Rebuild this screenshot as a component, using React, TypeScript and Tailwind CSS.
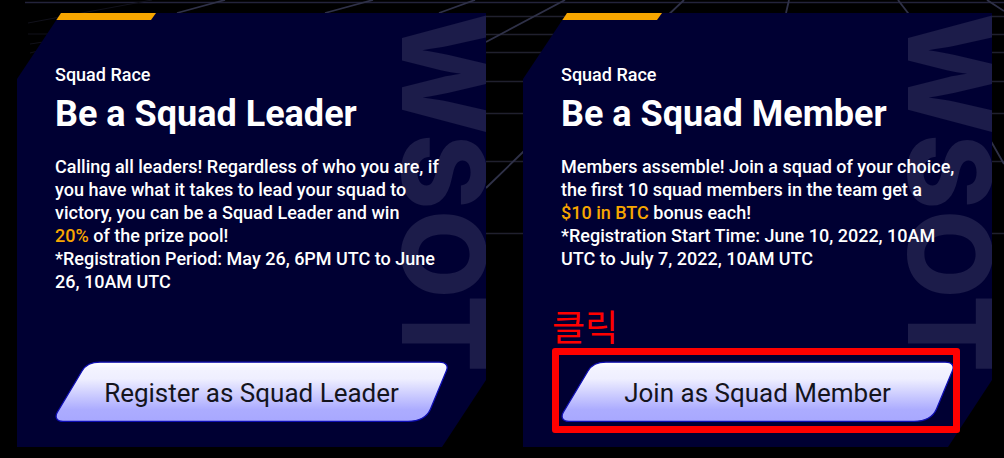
import type { ReactNode } from "react";

function GridBackdrop() {
  const rows = [16, 34, 52, 81, 113, 161, 233];
  return (
    <svg
      aria-hidden="true"
      className="absolute inset-0 h-full w-full"
      viewBox="0 0 1004 458"
      preserveAspectRatio="none"
      fill="none"
    >
      <path d="M25 2.5H1004" stroke="#23233b" strokeWidth="1.5" />
      {rows.map((y) => (
        <path key={y} d={`M486 ${y}.5H1004`} stroke="#20202e" strokeWidth="1.5" />
      ))}
      <g stroke="#2f3148" strokeWidth="1.8">
        <path d="M486 42L565 0M486 188L523 152L684 0M786 13L789 0M898 0L908 13L992 143L1004 164M987 0L1004 11" />
        <path d="M439 13L475 0M325 13L373 0M177 13L225 0" />
      </g>
      <path d="M28 23L152 0M28 34H50M30 44L50 41M30 53L38 51" stroke="#11111b" />
    </svg>
  );
}

function PanelShape() {
  return (
    <div
      aria-hidden="true"
      className="absolute inset-0 bg-[#000033] [clip-path:polygon(0_66px,44px_0,100%_0,100%_calc(100%_-_67px),calc(100%_-_44px)_100%,0_100%)]"
    >
      <div className="h-[7px] w-[139px] bg-[#f7a600] [clip-path:polygon(0_0,100%_0,calc(100%_-_5px)_100%,0_100%)]" />
      <div className="absolute right-0 top-0 flex w-[86px] justify-center font-['Inter'] text-[115px] font-extrabold leading-[86px] text-[#1c1c4a] [writing-mode:vertical-rl]">
        WSOT
      </div>
    </div>
  );
}

function SlantButton({ id, children }: { id: string; children: ReactNode }) {
  return (
    <button
      type="button"
      className="relative block h-[61px] w-full cursor-pointer pt-[3px] text-center text-[26px] leading-8 text-[#14141c]"
    >
      <svg
        aria-hidden="true"
        className="absolute inset-0 h-full w-full"
        viewBox="0 0 393 61"
        preserveAspectRatio="none"
      >
        <defs>
          <linearGradient id={id} x1="0" y1="0" x2="0" y2="1">
            <stop offset="0" stopColor="#ffffff" />
            <stop offset="0.1" stopColor="#f3f3ff" />
            <stop offset="0.28" stopColor="#efefff" />
            <stop offset="0.8" stopColor="#acacff" />
            <stop offset="1" stopColor="#a8a8ff" />
          </linearGradient>
        </defs>
        <path
          d="M8 60.3C2 60.3 -0.5 56.5 2.2 51.5L27 10C30.5 4 36 1.2 45 1.2H384C391 1.2 393.5 4.5 391.5 9.5L375.5 48C372 56 364 60.3 353 60.3Z"
          fill={`url(#${id})`}
          stroke="#0f0fb4"
          strokeWidth="1.3"
        />
      </svg>
      <span className="relative">{children}</span>
    </button>
  );
}

function SquadCard({
  title,
  action,
  children,
}: {
  title: string;
  action: ReactNode;
  children: ReactNode;
}) {
  return (
    <section className="relative">
      <PanelShape />
      <div className="relative flex h-full flex-col px-[38px] pb-[25px] pt-[50px]">
        <p className="text-[18px] font-medium leading-6">Squad Race</p>
        <h2 className="mt-1 text-[36px] font-bold leading-[46px]">{title}</h2>
        <p className="mb-[68px] mt-[18px] whitespace-nowrap text-[18px] font-medium leading-[23px]">
          {children}
        </p>
        <div className="mt-auto">{action}</div>
      </div>
    </section>
  );
}

export default function App() {
  return (
    <main className="relative bg-black font-['Roboto','Noto_Sans_CJK_KR',sans-serif] text-white">
      <GridBackdrop />
      <div className="relative grid grid-cols-2 gap-[37px] pb-[11px] pl-[17px] pr-3 pt-[13px]">
        <SquadCard
          title="Be a Squad Leader"
          action={<SlantButton id="leader-fill">Register as Squad Leader</SlantButton>}
        >
          Calling all leaders! Regardless of who you are, if
          <br />
          you have what it takes to lead your squad to
          <br />
          victory, you can be a Squad Leader and win
          <br />
          <span className="text-[#f7a600]">20%</span> of the prize pool!
          <br />
          *Registration Period: May 26, 6PM UTC to June
          <br />
          26, 10AM UTC
        </SquadCard>
        <SquadCard
          title="Be a Squad Member"
          action={
            <div className="relative">
              <SlantButton id="member-fill">Join as Squad Member</SlantButton>
              <div className="pointer-events-none absolute -bottom-[11px] -left-[9px] -right-[6px] -top-[13px] rounded-[3px] border-[7px] border-[#ff0000]" />
              <span className="absolute -left-[9px] -top-[56px] font-['Noto_Sans_CJK_KR',sans-serif] text-[36px] leading-10 text-[#ff0000]">
                클릭
              </span>
            </div>
          }
        >
          Members assemble! Join a squad of your choice,
          <br />
          the first 10 squad members in the team get a
          <br />
          <span className="text-[#f7a600]">$10 in BTC</span> bonus each!
          <br />
          *Registration Start Time: June 10, 2022, 10AM
          <br />
          UTC to July 7, 2022, 10AM UTC
        </SquadCard>
      </div>
    </main>
  );
}
